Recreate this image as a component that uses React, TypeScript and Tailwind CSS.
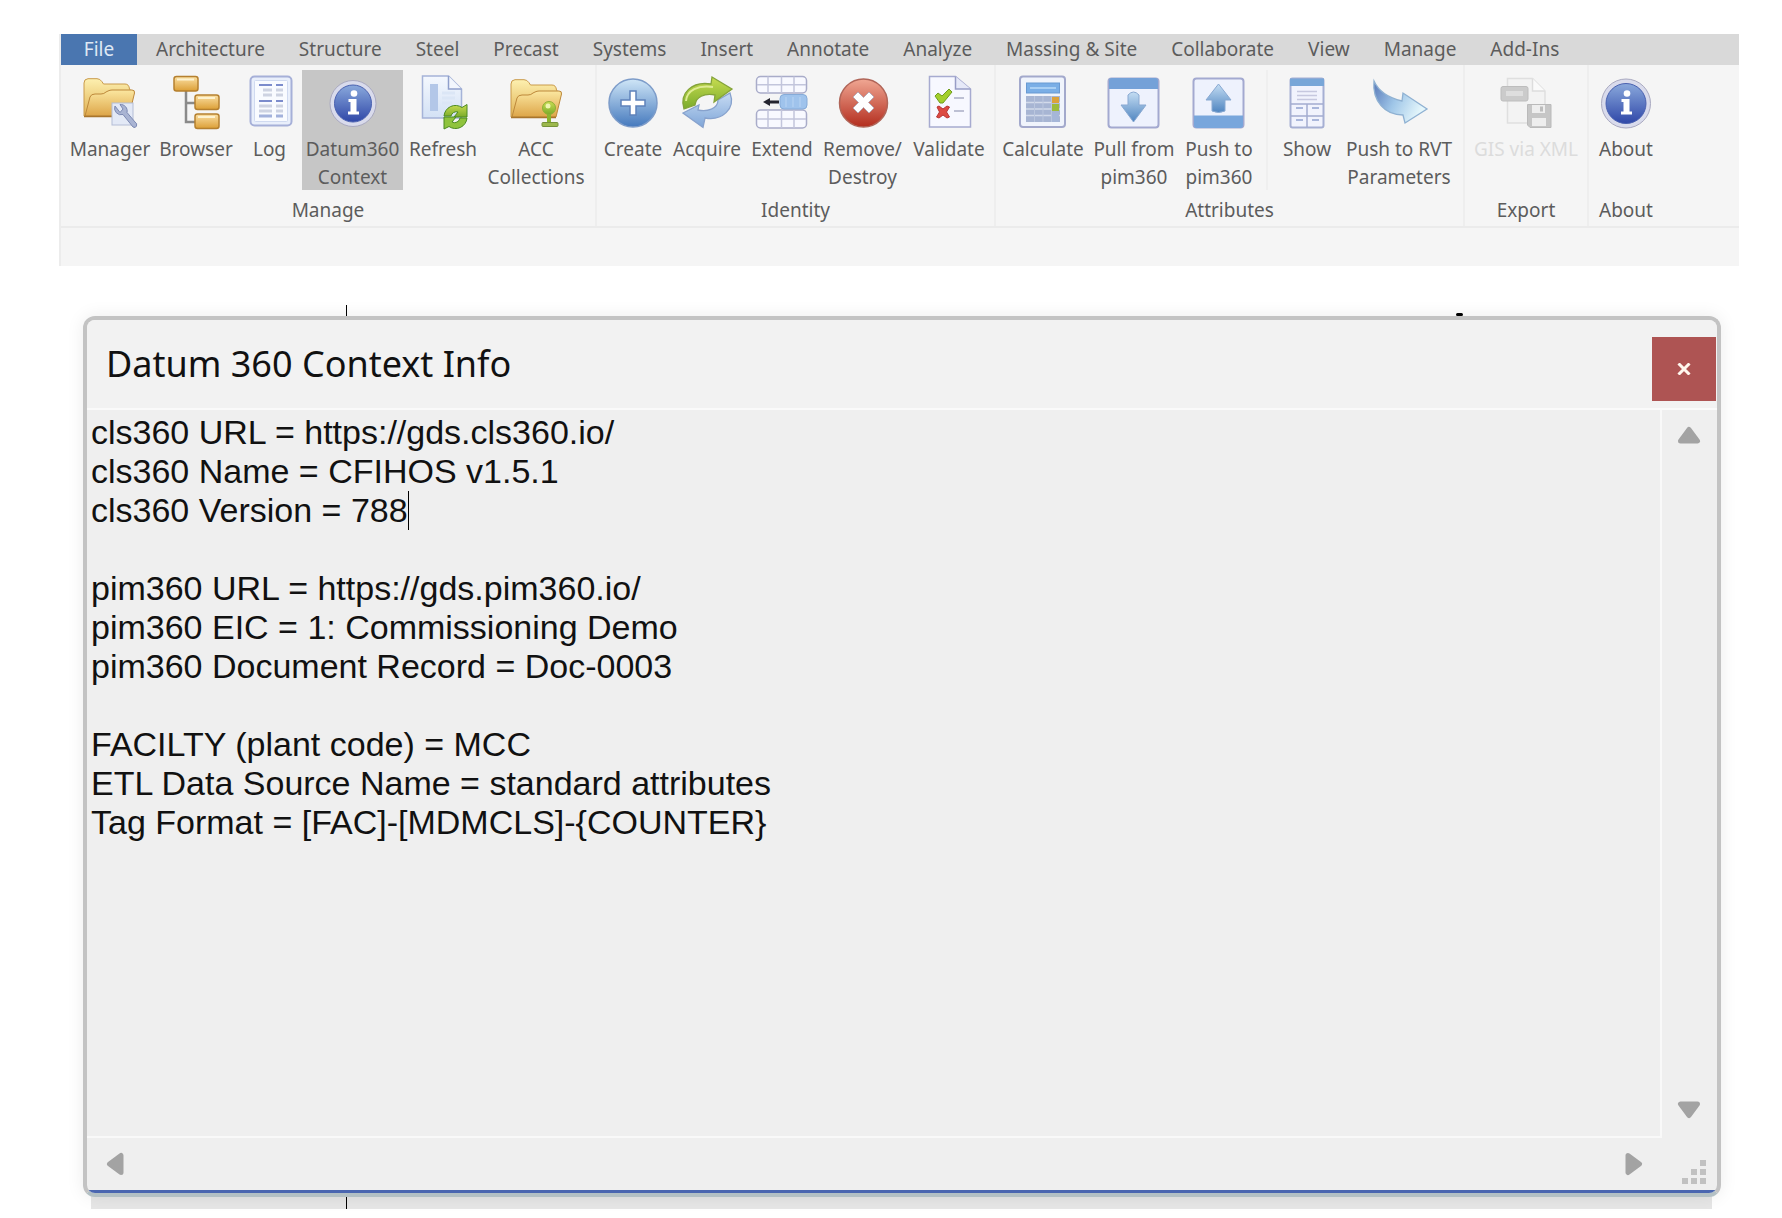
import React from 'react';

type IconName =
  | 'manager' | 'browser' | 'log' | 'info' | 'refresh' | 'acc' | 'create' | 'acquire' | 'extend'
  | 'remove' | 'validate' | 'calculate' | 'pull' | 'push' | 'show' | 'rvt' | 'gis' | 'about';

const TABS = [
  'Architecture', 'Structure', 'Steel', 'Precast', 'Systems', 'Insert', 'Annotate', 'Analyze',
  'Massing & Site', 'Collaborate', 'View', 'Manage', 'Add-Ins',
];

type Tool = { icon: IconName; lines: string[]; width: string; active?: boolean; disabled?: boolean; ruleBefore?: boolean };
type Panel = { label: string; tools: Tool[]; pad: string };

const PANELS: Panel[] = [
  {
    label: 'Manage',
    pad: 'pl-1 pr-[6px]',
    tools: [
      { icon: 'manager', lines: ['Manager'], width: 'w-[90px]' },
      { icon: 'browser', lines: ['Browser'], width: 'w-[82px]' },
      { icon: 'log', lines: ['Log'], width: 'w-[65px]' },
      { icon: 'info', lines: ['Datum360', 'Context'], width: 'w-[101px]', active: true },
      { icon: 'refresh', lines: ['Refresh'], width: 'w-[80px]' },
      { icon: 'acc', lines: ['ACC', 'Collections'], width: 'w-[106px]' },
    ],
  },
  {
    label: 'Identity',
    pad: 'pl-[1px] pr-[3px]',
    tools: [
      { icon: 'create', lines: ['Create'], width: 'w-[70px]' },
      { icon: 'acquire', lines: ['Acquire'], width: 'w-[78px]' },
      { icon: 'extend', lines: ['Extend'], width: 'w-[72px]' },
      { icon: 'remove', lines: ['Remove/', 'Destroy'], width: 'w-[89px]' },
      { icon: 'validate', lines: ['Validate'], width: 'w-[84px]' },
    ],
  },
  {
    label: 'Attributes',
    pad: 'pl-[2px] pr-[3px]',
    tools: [
      { icon: 'calculate', lines: ['Calculate'], width: 'w-[90px]' },
      { icon: 'pull', lines: ['Pull from', 'pim360'], width: 'w-[92px]' },
      { icon: 'push', lines: ['Push to', 'pim360'], width: 'w-[78px]' },
      { icon: 'show', lines: ['Show'], width: 'w-[62px]', ruleBefore: true },
      { icon: 'rvt', lines: ['Push to RVT', 'Parameters'], width: 'w-[122px]' },
    ],
  },
  { label: 'Export', pad: '', tools: [{ icon: 'gis', lines: ['GIS via XML'], width: 'w-[122px]', disabled: true }] },
  { label: 'About', pad: '', tools: [{ icon: 'about', lines: ['About'], width: 'w-[74px]' }] },
];

const CONTEXT_LINES = [
  'cls360 URL = https://gds.cls360.io/',
  'cls360 Name = CFIHOS v1.5.1',
  'cls360 Version = 788',
  '',
  'pim360 URL = https://gds.pim360.io/',
  'pim360 EIC = 1: Commissioning Demo',
  'pim360 Document Record = Doc-0003',
  '',
  'FACILTY (plant code) = MCC',
  'ETL Data Source Name = standard attributes',
  'Tag Format = [FAC]-[MDMCLS]-{COUNTER}',
];

/* Gradients shared by the ribbon icons. */
function Gradients() {
  const defs: [string, string, string][] = [
    ['gold', '#fbe7a0', '#dda548'],
    ['goldBack', '#fdf0b0', '#e0b050'],
    ['node', '#fbe0a4', '#dc9f36'],
    ['blueBall', '#8aa9dc', '#2f47a8'],
    ['skyBall', '#cfe6f7', '#4579bd'],
    ['redBall', '#f0a793', '#b32d1e'],
    ['page', '#f4f8fe', '#d3e1f5'],
    ['green', '#c9dd52', '#7aab2a'],
    ['blueArrow', '#c7dbf3', '#7fa6d8'],
    ['skyArrow', '#c4ddf3', '#5085c0'],
  ];
  return (
    <svg className="absolute size-0" aria-hidden="true">
      <defs>
        {defs.map(([id, a, b]) => (
          <linearGradient key={id} id={id} x1="0" y1="0" x2="0" y2="1">
            <stop offset="0" stopColor={a} />
            <stop offset="1" stopColor={b} />
          </linearGradient>
        ))}
        <linearGradient id="swoosh" x1="0" y1="0" x2="1" y2="0.4">
          <stop offset="0" stopColor="#5878b8" />
          <stop offset="0.5" stopColor="#9fc6e8" />
          <stop offset="1" stopColor="#e4f6fb" />
        </linearGradient>
      </defs>
    </svg>
  );
}

function Folder() {
  return (
    <>
      <path d="M1 41V8q0-4 4-4.300h9q3 0 5 3l1.500 2.300H42q4 0 4.500 5L50 18 45 41z" fill="url(#goldBack)" stroke="#c99a4a" />
      <path d="M2 41 7 22q1-3 5-3h6q3 0 5-2l2-1q2-1 4-1h20q3 0 2.500 3L46 41z" fill="url(#gold)" stroke="#bd883a" />
      <path d="M1 41.500h45" stroke="#a9752c" strokeWidth="1.500" />
    </>
  );
}

function InfoBall({ r }: { r: number }) {
  return (
    <>
      <circle cx="27" cy="28.500" r={r} fill="#d9dbec" stroke="#a9a9c0" />
      <circle cx="27" cy="28.500" r={r - 4.5} fill="url(#blueBall)" stroke="#4a61b0" />
      <circle cx="28" cy="18.500" r="3.300" fill="#fff" />
      <path d="M22.500 24h8v12.500h2.500v3H22v-3h2.500V27h-2z" fill="#fff" />
    </>
  );
}

function Grid({ y, h }: { y: number; h: number }) {
  return (
    <g stroke="#a9acc9" strokeWidth="1.500">
      <rect x="1.500" y={y} width="50" height={h} rx="4" fill="#f8f9ff" />
      <path d={`M2 ${y + h / 2}h49M13 ${y}v${h}M26.500 ${y}v${h}M39 ${y}v${h}`} stroke="#c2c5dc" />
    </g>
  );
}

const ICONS: Record<IconName, React.ReactNode> = {
  manager: (
    <>
      <Folder />
      <rect x="29" y="28" width="21" height="22" fill="#e3e9f6" stroke="#b4bdd6" />
      <path d="M32 31a6.500 6.500 0 0 0 8 8.500L50 52q2.500 1.500 3.500-1t-1.500-4L44 37.500a6.500 6.500 0 0 0-7-8l3 4.500-3 3.500z" fill="#a9b4d3" stroke="#7c89b3" />
    </>
  ),
  browser: (
    <>
      <path d="M17 16v31h10M17 28h10" fill="none" stroke="#8a8a8a" strokeWidth="2.500" />
      {[[5, 1.5], [26, 20], [26, 39]].map(([x, y]) => (
        <g key={y}>
          <rect x={x} y={y} width="24" height="14.500" rx="2.500" fill="url(#node)" stroke="#b5802f" strokeWidth="1.500" />
          <path d={`M${x + 3} ${y + 3}h17`} stroke="#fdf2cf" strokeWidth="2" />
        </g>
      ))}
    </>
  ),
  log: (
    <>
      <rect x="7.500" y="1.500" width="41" height="49" rx="4" fill="#e9effb" stroke="#a6b0d8" strokeWidth="2" />
      <rect x="11.500" y="5.500" width="33" height="41" rx="1" fill="#f9fbff" stroke="#d0daf0" />
      <path d="M16 10h13M33 10h7M16 26h13M33 26h7" stroke="#7c8ccc" strokeWidth="2" />
      <path d="M20 15h9M33 15h7M20 20h9M33 20h7M16 31h13M33 31h7M16 36h13M33 36h7" stroke="#ced3e2" strokeWidth="3" />
      <path d="M16 41h13M33 41h7" stroke="#a3b2dc" strokeWidth="3" />
    </>
  ),
  info: <InfoBall r={23} />,
  about: <InfoBall r={24.5} />,
  refresh: (
    <>
      <path d="M6.500 1h26L45.500 14v29h-39z" fill="url(#page)" stroke="#a5b3d8" strokeWidth="1.500" />
      <path d="M32.500 1v13h13" fill="#f2f6fd" stroke="#8f9fcb" strokeWidth="1.500" />
      <path d="M14 9h8v27h-8z" fill="#b3c7e8" />
      <path d="M26 18h13M26 23h13M26 28h10" stroke="#dbe6f6" strokeWidth="3" />
      <path d="M28 41a11.500 11.500 0 0 1 18-8.500l5-3v12.500H38l4-5a5.500 5.500 0 0 0-7 4z" fill="url(#green)" stroke="#4b8a20" />
      <path d="M51 43a11.500 11.500 0 0 1-18 8.500l-5 2.500V42h12l-4 5a5.500 5.500 0 0 0 8-4z" fill="#8fc33c" stroke="#4b8a20" />
    </>
  ),
  acc: (
    <>
      <g transform="translate(1 1)"><Folder /></g>
      <path d="M40 38v11" stroke="#8ab52e" strokeWidth="4" />
      <circle cx="40" cy="33" r="6.500" fill="url(#green)" stroke="#8fae36" />
      <circle cx="39" cy="31" r="2.500" fill="#eef5b0" />
      <rect x="33" y="47.500" width="16" height="4" rx="1" fill="#9cb84c" stroke="#76923a" />
    </>
  ),
  create: (
    <>
      <circle cx="27" cy="28" r="24" fill="url(#skyBall)" stroke="#7d9cc9" strokeWidth="1.500" />
      <path d="M24 16h6v9h9v6h-9v9h-6v-9h-9v-6h9z" fill="#fff" stroke="#5f82bb" strokeWidth="1.500" />
    </>
  ),
  acquire: (
    <>
      <path d="M50 18C56 34 42 46 25 43l-2 9.500L3 38l16-8-1 5c9 2 20-1 20-10z" fill="url(#blueArrow)" stroke="#87a2cd" strokeWidth="1.300" />
      <path d="M4 34C-1 18 12 6 31 9l1-7 20 12-18 13 1-7c-11-2-19 2-20 10z" fill="url(#green)" stroke="#84a33a" strokeWidth="1.300" />
      <path d="M6 26C7 15 18 10 33 12" fill="none" stroke="#dfec92" strokeWidth="2" />
    </>
  ),
  extend: (
    <>
      <Grid y={1.5} h={16.5} />
      <Grid y={35} h={18} />
      <rect x="25" y="19.500" width="27" height="14.500" rx="4" fill="#9fc3ec" stroke="#86abd8" />
      <path d="M31 22v10M38 22v10M45 22v10" stroke="#b9d4f3" />
      <path d="M8 27l7-4v2.500h9v3h-9V31z" fill="#25252f" />
    </>
  ),
  remove: (
    <>
      <circle cx="27.500" cy="28" r="24" fill="url(#redBall)" stroke="#b06558" strokeWidth="1.500" />
      <path d="m17 22 5-5 5.500 5.500L33 17l5 5-5.500 5.500L38 33l-5 5-5.500-5.500L22 38l-5-5 5.500-5.500z" fill="#fff" stroke="#b7a8b4" />
    </>
  ),
  validate: (
    <>
      <path d="M7.500 1.500h26L48.500 14v38h-41z" fill="#f7f8ff" stroke="#a7abd0" strokeWidth="1.500" />
      <path d="M33.500 1.500V14h15" fill="#e6e9f8" stroke="#989dc6" strokeWidth="1.500" />
      <path d="m13 21 3-3 4 3 7-7 3 3-9 11h-3z" fill="#a3cf2c" stroke="#6f9d1e" />
      <path d="m15 32 2-1 4 3 4-3 2.500 1-3 5 3 5-2.500 1-4-3-4 3-2.500-1 3-5z" fill="#dc4a42" stroke="#b93535" />
      <path d="M32 23h10M32 36h10" stroke="#bdc0d4" strokeWidth="2" />
    </>
  ),
  calculate: (
    <>
      <rect x="4" y="1.500" width="45" height="50.500" rx="3" fill="#f0f4fc" stroke="#a3a9cc" strokeWidth="2" />
      <rect x="10.500" y="8" width="33" height="10" fill="#7aaee6" stroke="#6899d2" />
      <path d="M14 13h26" stroke="#a9cff4" strokeWidth="2" />
      <rect x="10" y="21" width="34" height="26" fill="#a7b5d3" />
      <path d="M10 27.500h34M10 34h34M10 40.500h34" stroke="#d2daea" strokeWidth="1.500" />
      <path d="M18.500 21v26M27 21v26M35.500 21v26" stroke="#bac6de" />
      <rect x="36" y="22" width="7" height="6" fill="#dba23c" />
      <rect x="36" y="29" width="7" height="7" fill="#9dbb3c" />
      <path d="M36 38h7v9h-7z" fill="#a5b6d8" />
    </>
  ),
  pull: (
    <>
      <rect x="1.500" y="3.500" width="50" height="49" rx="3" fill="#eef2fd" stroke="#a3a9d0" strokeWidth="2" />
      <path d="M2 14V6q0-3 3-3h43q3 0 3 3v8z" fill="#74a1d8" />
      <path d="M21 20q5.500-6 11 0v10h7L26.500 47 14 30h7z" fill="url(#skyArrow)" stroke="#89a9d2" />
    </>
  ),
  push: (
    <>
      <rect x="1.500" y="3.500" width="50" height="49" rx="3" fill="#eef2fd" stroke="#a3a9d0" strokeWidth="2" />
      <path d="M2 40.500h49V50q0 3-3 3H5q-3 0-3-3z" fill="#78a6dc" />
      <path d="M26.500 9 39 25h-6v11q-6.500 3-13 0V25h-6z" fill="url(#skyArrow)" stroke="#89a9d2" />
    </>
  ),
  show: (
    <>
      <rect x="10.500" y="3.500" width="33" height="49" rx="2" fill="#f1f3fd" stroke="#a6afd3" strokeWidth="2" />
      <path d="M10 11V3.500h34V11z" fill="#78a6d8" />
      <path d="M17 16.500h20M17 20.500h20M17 24.500h20" stroke="#c6c8df" strokeWidth="1.500" />
      <path d="M11 29h32M11 41h32M27 29v23" stroke="#a3acd0" strokeWidth="1.500" />
      <path d="M16 33h7M32 33h7M16 45h7M32 45h7" stroke="#a9b6db" strokeWidth="2" />
    </>
  ),
  rvt: (
    <path d="M2 6c5 11 15 17 28 20l1-8 24 16-22 14-2-8C13 40 0 26 2 6z" fill="url(#swoosh)" stroke="#8fb1d2" strokeWidth="1.300" />
  ),
  gis: (
    <>
      <path d="M8.500 3.500h25L46 16v32H8.500z" fill="#f3f3f3" stroke="#dfdfdf" strokeWidth="1.500" />
      <path d="M33.500 3.500V16H46" fill="#fafafa" stroke="#dddddd" strokeWidth="1.500" />
      <rect x="2" y="11.500" width="27" height="14.500" rx="2" fill="#cbcbcb" stroke="#bdbdbd" />
      <path d="M7 16h17v5H7z" fill="#dedede" />
      <path d="M28.500 29.500H52v23H31l-2.500-2.500z" fill="#c6c6c6" stroke="#bababa" />
      <path d="M33 30h13v8H33zM33 43h14v8H33z" fill="#eeeeee" />
      <path d="M41 31.500h3v5h-3z" fill="#bdbdbd" />
    </>
  ),
};

function ToolButton({ tool }: { tool: Tool }) {
  return (
    <>
      {tool.ruleBefore && <span aria-hidden="true" className="mx-2 h-[120px] w-[2px] bg-[#efefef]" />}
      <button
        type="button"
        disabled={tool.disabled}
        aria-pressed={tool.active}
        className={`flex h-[120px] shrink-0 flex-col items-center pt-[5px] ${tool.width} ${tool.active ? 'bg-[#c6c6c6]' : ''} ${
          tool.disabled ? 'text-[#dcdcdc]' : 'text-[#5c5c5c]'
        }`}
      >
        <svg viewBox="0 0 54 54" className="size-[54px] shrink-0 overflow-visible" fill="none" aria-hidden="true">
          {ICONS[tool.icon]}
        </svg>
        <span className="mt-[6px] text-center leading-7 whitespace-nowrap">
          {tool.lines.map((line) => (
            <span key={line} className="block">{line}</span>
          ))}
        </span>
      </button>
    </>
  );
}

function Ribbon() {
  return (
    <header className="border-l-2 border-[#ececec] bg-[#f5f5f5] font-['Noto_Sans',sans-serif] text-[19px] text-[#5c5c5c]">
      <nav className="flex h-[31px] items-stretch bg-[#d9d9d9]" aria-label="Ribbon tabs">
        <button type="button" className="mr-[2px] w-[76px] bg-[#4a76b0] leading-[31px] text-[#dfe8f4]">File</button>
        {TABS.map((tab) => (
          <button key={tab} type="button" className="shrink-0 px-[17px] leading-[31px] whitespace-nowrap">{tab}</button>
        ))}
      </nav>
      <div className="flex border-b-2 border-[#ebebeb]">
        {PANELS.map((panel) => (
          <section key={panel.label} aria-label={panel.label} className="border-r-2 border-[#eeeeee] pt-[5px] last:border-r-0">
            <div className={`flex ${panel.pad}`}>
              {panel.tools.map((tool) => <ToolButton key={tool.icon} tool={tool} />)}
            </div>
            <p className="pt-[6px] pb-[2px] text-center leading-7">{panel.label}</p>
          </section>
        ))}
      </div>
      <div className="h-[38px]" />
    </header>
  );
}

type Direction = 'up' | 'down' | 'left' | 'right';

const TURN: Record<Direction, string> = { up: '', down: 'rotate-180', left: '-rotate-90', right: 'rotate-90' };

function ScrollArrow({ to }: { to: Direction }) {
  return (
    <button type="button" aria-label={`Scroll ${to}`} className="flex size-6 items-center justify-center">
      <svg viewBox="0 0 24 18" className={`h-[18px] w-6 shrink-0 ${TURN[to]}`} aria-hidden="true">
        <path d="M12 3.500 20.500 15h-17z" fill="#a3a3a3" stroke="#a3a3a3" strokeWidth="5" strokeLinejoin="round" />
      </svg>
    </button>
  );
}

function ContextDialog() {
  return (
    <section
      role="dialog"
      aria-labelledby="dialog-title"
      className="relative overflow-hidden rounded-xl border-4 border-[#c3c3c3] border-b-[#b3c0c4] bg-[#efefef] shadow-[0_0_18px_rgba(0,0,0,0.08)]"
    >
      <div className="border-b-[3px] border-[#4a66b0]">
        <div className="flex items-start justify-between bg-[#f2f2f2] pt-[17px] pr-px">
          <h1 id="dialog-title" className="pl-[19px] font-['Noto_Sans',sans-serif] text-[36px] leading-[54px] text-[#111]">
            Datum 360 Context Info
          </h1>
          <button type="button" aria-label="Close" className="mb-[7px] flex size-[64px] items-center justify-center bg-[#ae5453]">
            <svg viewBox="0 0 14 12" className="h-3 w-[14px]" aria-hidden="true">
              <path d="M1.500 0.500 12.500 11.500M12.500 0.500 1.500 11.500" stroke="#fff7ee" strokeWidth="3" />
            </svg>
          </button>
        </div>
        <div className="flex border-t-2 border-[#fafafa]">
          <div className="relative grow border-r-2 border-b-2 border-[#f9f9f9]">
            <textarea
              aria-label="Context information"
              readOnly
              wrap="off"
              value={CONTEXT_LINES.join('\n')}
              className="block h-[726px] w-full resize-none overflow-hidden bg-transparent pt-[3px] pl-1 font-['Liberation_Sans',Arial,sans-serif] text-[34px] leading-[39px] text-[#111] outline-none"
            />
            <div aria-hidden="true" className="pointer-events-none absolute top-[81px] left-1 flex font-['Liberation_Sans',Arial,sans-serif] text-[34px] leading-[39px]">
              <span className="invisible">{CONTEXT_LINES[2]}</span>
              <span className="w-px bg-black" />
            </div>
          </div>
          <div className="flex w-[55px] flex-col items-center justify-between pt-[13px] pr-[2px] pb-[16px]">
            <ScrollArrow to="up" />
            <ScrollArrow to="down" />
          </div>
        </div>
        <div className="flex h-[52px] items-center justify-between pr-[11px] pl-4">
          <ScrollArrow to="left" />
          <div className="flex items-center gap-[36px]">
            <ScrollArrow to="right" />
            <svg viewBox="0 0 24 24" className="mt-4 size-6" fill="#c1c1c1" aria-hidden="true">
              <path d="M18 0h6v6h-6zM9 9h6v6H9zM18 9h6v6h-6zM0 18h6v6H0zM9 18h6v6H9zM18 18h6v6h-6z" />
            </svg>
          </div>
        </div>
      </div>
    </section>
  );
}

export default function App() {
  return (
    <div className="min-h-screen bg-white pt-[34px] pr-[43px] pl-[59px]">
      <Gradients />
      <Ribbon />
      <main className="relative mt-[39px] pt-[11px] pr-[18px] pb-3 pl-6">
        <div aria-hidden="true" className="absolute right-[27px] bottom-0 left-[32px] h-6 bg-[#e6e6e6]" />
        <div aria-hidden="true" className="absolute inset-y-0 left-[287px] w-px bg-black" />
        <div aria-hidden="true" className="absolute top-2 right-[276px] h-[3px] w-[7px] rounded-sm bg-black" />
        <ContextDialog />
      </main>
    </div>
  );
}
